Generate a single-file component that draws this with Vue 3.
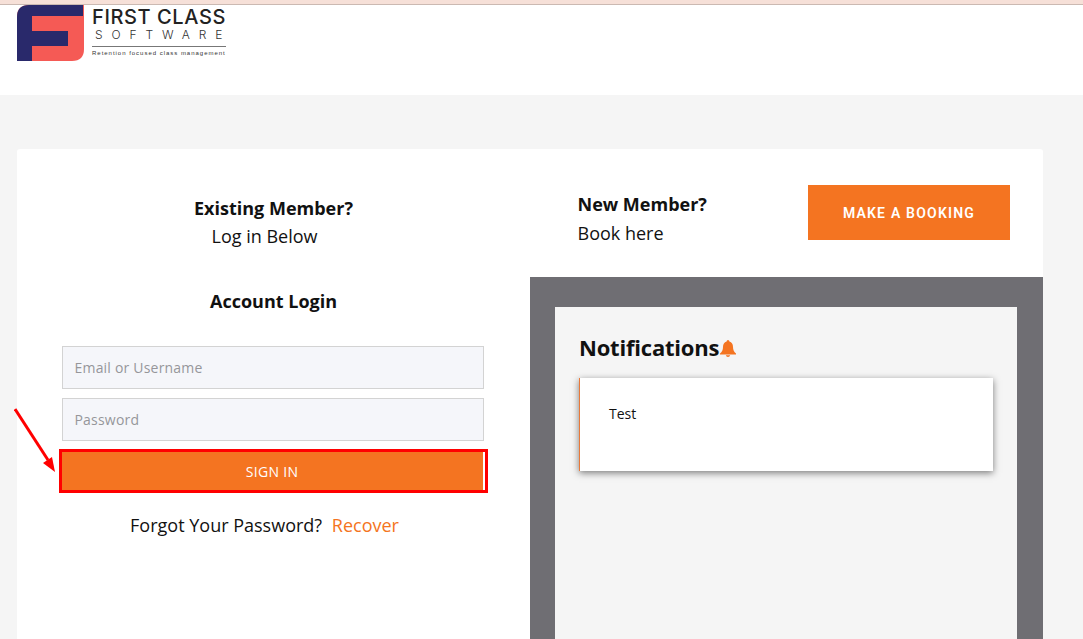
<script setup>
const fields = [
  { placeholder: 'Email or Username', type: 'text' },
  { placeholder: 'Password', type: 'password' },
]
</script>

<template>
  <div class="page">
    <div class="strip"></div>
    <header class="header">
      <div class="logo">
        <svg class="mark" width="67" height="56" viewBox="0 0 67 56">
          <path d="M0 56V12Q0 0 12 0H67V44Q67 56 55 56Z" fill="#f55a55" />
          <path d="M0 56V12Q0 0 12 0H66V11H15V26H51V41H15V56Z" fill="#29296b" />
        </svg>
        <div class="wordmark">
          <div class="brand">FIRST CLASS</div>
          <div class="soft">SOFTWARE</div>
          <div class="tag">Retention focused class management</div>
        </div>
      </div>
    </header>
    <main class="main">
      <section class="card">
        <div class="left">
          <h3 class="existing">Existing Member?</h3>
          <p class="below">Log in Below</p>
          <h3 class="account">Account Login</h3>
          <form class="form" @submit.prevent>
            <input v-for="f in fields" :key="f.placeholder" class="input" :type="f.type" :placeholder="f.placeholder" />
            <button class="signin" type="submit">SIGN IN</button>
          </form>
          <p class="forgot">Forgot Your Password? <a class="recover">Recover</a></p>
          <svg class="arrow" width="50" height="70" viewBox="0 0 50 70">
            <path d="M1 2L34 53" stroke="#f00" stroke-width="3" fill="none" />
            <path d="M41 65L29 56L38 50Z" fill="#f00" />
          </svg>
        </div>
        <div class="right">
          <div class="newbar">
            <div class="newtext">
              <h3 class="newhead">New Member?</h3>
              <p class="book">Book here</p>
            </div>
            <a class="booking">MAKE A BOOKING</a>
          </div>
          <div class="panel">
            <div class="inner">
              <h2 class="ntitle">Notifications<svg class="bell" width="16" height="17" viewBox="0 0 16 17"><path d="M8 0Q9.400 0 9.400 1.500Q13 2.500 13 7Q13 11 16 13.500V14.500H0V13.500Q3 11 3 7Q3 2.500 6.600 1.500Q6.600 0 8 0Z M5.800 15.300H10.200Q9.800 17 8 17Q6.200 17 5.800 15.300Z" fill="#f47421"/></svg></h2>
              <div class="note">Test</div>
            </div>
          </div>
        </div>
      </section>
    </main>
  </div>
</template>

<style>
html, body { margin: 0; height: 100%; overflow: hidden; background: #f5f5f5; }
</style>

<style scoped>
.page { height: 639px; overflow: hidden; background: #f5f5f5; font-family: "Open Sans", "Liberation Sans", sans-serif; color: #111; }
.strip { height: 4px; background: #f6e0d8; border-bottom: 1px solid #cbb9b2; }
.header { height: 90px; background: #fff; padding-left: 17px; }
.logo { display: flex; gap: 8px; align-items: flex-start; }
.mark { display: block; }
.wordmark { width: 134px; }
.brand { font-family: Inter, "Liberation Sans", sans-serif; font-weight: 500; font-size: 20px; letter-spacing: .6px; line-height: 22px; margin-top: 1px; color: #222; white-space: nowrap; }
.soft { font-family: Inter, "Liberation Sans", sans-serif; font-weight: 300; font-size: 12px; letter-spacing: 8.900px; line-height: 14px; color: #333; padding-left: 3px; white-space: nowrap; border-bottom: 1px solid #777; padding-bottom: 4px; }
.tag { font-family: "Liberation Sans", sans-serif; font-size: 6px; line-height: 9px; letter-spacing: .98px; margin-top: 2px; color: #333; white-space: nowrap; }
.main { padding: 54px 40px 0 17px; }
.card { display: grid; grid-template-columns: 513px 513px; background: #fff; border-radius: 3px; height: 560px; }
.left { position: relative; display: flex; flex-direction: column; align-items: center; padding-top: 46px; }
.existing { margin: 0; font-size: 18px; font-weight: 700; line-height: 26px; }
.below { margin: 2px 18px 0 0; font-size: 18px; line-height: 26px; color: #111; }
.account { margin: 39px 0 0; font-size: 18px; font-weight: 700; line-height: 26px; }
.form { display: flex; flex-direction: column; width: 422px; margin: 32px 2px 0 0; }
.input { box-sizing: border-box; width: 422px; height: 43px; margin-bottom: 9px; padding: 0 12px; border: 1px solid #d3d3d3; background: #f5f6fa; font: 14px "Open Sans", sans-serif; letter-spacing: .2px; }
.input::placeholder { color: #96969a; opacity: 1; }
.signin { box-sizing: border-box; width: 429px; height: 44px; margin: -1px 0 0 -3px; border: 3px solid #f00; background: #f47421; box-shadow: inset -2px 0 0 #fff; color: #fff; font: 14px "Open Sans", sans-serif; letter-spacing: .3px; padding: 0 2px 0 0; }
.forgot { margin: 19px 18px 0 0; font-size: 18px; line-height: 26px; color: #111; }
.recover { color: #f47421; margin-left: 5px; }
.arrow { position: absolute; left: -3px; top: 258px; }
.right { display: flex; flex-direction: column; }
.newbar { display: flex; height: 128px; box-sizing: border-box; padding: 36px 33px 0 48px; justify-content: space-between; align-items: flex-start; }
.newtext { padding-top: 6px; }
.newhead { margin: 0 0 0 -.5px; font-size: 18px; font-weight: 700; line-height: 26px; }
.book { margin: 3px 0 0 -.5px; font-size: 18px; line-height: 26px; }
.booking { width: 202px; height: 55px; background: #f47421; color: #fff; font-family: Roboto, sans-serif; font-size: 14px; font-weight: 600; letter-spacing: 1.200px; display: flex; align-items: center; justify-content: center; }
.panel { flex: 1; background: #6f6e73; padding: 30px 26px 0 25px; }
.inner { height: 100%; background: #f5f5f5; padding: 24px 24px 0 24px; box-sizing: border-box; }
.ntitle { margin: 0; font-size: 22px; line-height: 33px; font-weight: 700; letter-spacing: -.2px; display: flex; align-items: center; }
.bell { margin-top: 1px; margin-left: 1px; }
.note { margin-top: 14px; height: 93px; box-sizing: border-box; background: #fff; padding: 26px 29px; font-size: 14px; line-height: 19px; border-left: 1px solid #e8793a; box-shadow: 0 2px 7px rgba(0,0,0,.5); }
</style>
